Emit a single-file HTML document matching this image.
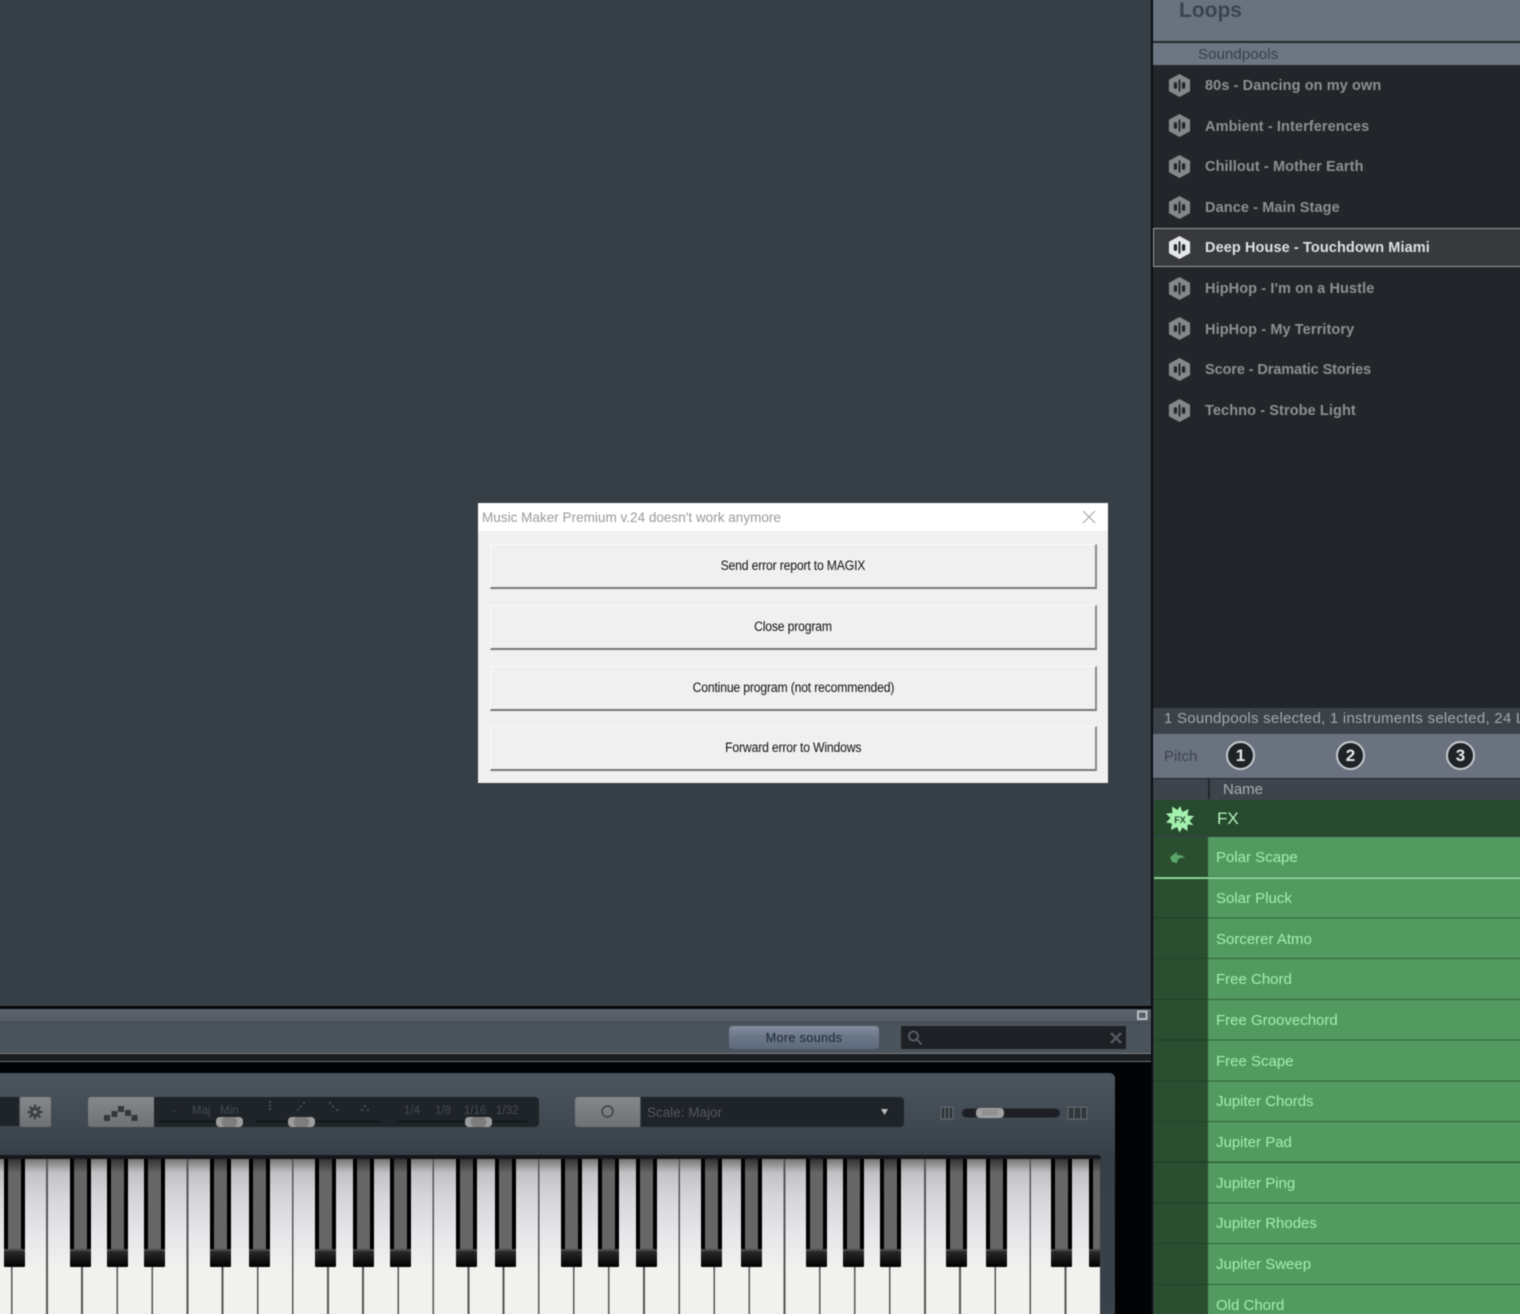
<!DOCTYPE html>
<html><head><meta charset="utf-8"><title>Music Maker</title>
<style>
html{margin:0;padding:0;width:1520px;height:1314px;overflow:hidden;background:#363e46}
body{margin:0;padding:0;width:1520px;height:1314px;position:relative;overflow:hidden;background:#363e46;font-family:"Liberation Sans",sans-serif}
.a{position:absolute}
.t{position:absolute;white-space:nowrap;line-height:1}
.l{position:absolute;left:1205px;white-space:nowrap;font-size:14.5px;font-weight:bold;color:#8d9093;line-height:18px;letter-spacing:.1px}
.i{position:absolute;left:1168px}
.g{position:absolute;left:1216px;white-space:nowrap;font-size:15px;color:#a5eeb0;line-height:18px}
.b{position:absolute;left:490px;width:604px;height:42px;background:#f0f0f0;border-top:1px solid #fafafa;border-left:1px solid #fafafa;border-right:2px solid #8a8a8a;border-bottom:2px solid #777;text-align:center;font-size:13.5px;line-height:42px;color:#111;letter-spacing:-.2px}
.b span{display:inline-block;transform:scaleX(.905)}
.c{position:absolute;top:741px;width:25px;height:25px;border-radius:50%;background:#1e2327;border:2.5px solid #c6cace;color:#e8e8e8;font-weight:bold;font-size:17px;text-align:center;line-height:26px}
.s{position:absolute;top:1106px;font-size:11.5px;color:#454c51;line-height:1;white-space:nowrap}
.th{position:absolute;top:1117px;width:27px;height:10px;border-radius:4px;background:repeating-linear-gradient(90deg,#707070 0 1px,#8a8a8a 1px 2px);box-shadow:inset 6px 0 0 #9c9c9c,inset -6px 0 0 #9c9c9c}
.k{position:absolute;top:1159px;width:21px;height:108px;background:linear-gradient(#000 0 90px,#4a4a4a 90px 92px,#2b2b2b 92px,#000 108px);border-radius:0 0 1px 1px}
.k:before{content:"";position:absolute;left:4px;top:0;width:13px;height:90px;background:linear-gradient(#333,#666 14px)}
#w{position:absolute;left:0;top:1159px;width:1100px;height:165px;background:linear-gradient(#777,#c2c2c6 14px,#d6d6da 38px,#e8e8ec 78px,#f1f1ee 110px)}
#sep{position:absolute;left:11px;top:1159px;width:1088px;height:165px;background:repeating-linear-gradient(90deg,#555 0 1.7px,transparent 1.7px 35.12px)}
</style></head>
<body>
<div id="root" style="position:absolute;inset:0;filter:blur(.5px)">

<!-- bottom instrument area -->
<div class="a" style="left:-5px;top:1006px;width:1157px;height:3px;background:#050607"></div>
<div class="a" style="left:-5px;top:1009px;width:1157px;height:13px;background:linear-gradient(#5d6670,#515962);border-bottom:1px solid #3e454c"></div>
<div class="a" style="left:-5px;top:1023px;width:1157px;height:30px;background:#4b545c"></div>
<div class="a" style="left:-5px;top:1053px;width:1157px;height:1px;background:#7b8287"></div>
<div class="a" style="left:-5px;top:1054px;width:1157px;height:7px;background:#1a1e22"></div>
<div class="a" style="left:-5px;top:1061px;width:1157px;height:1px;background:#6e757b"></div>
<div class="a" style="left:-5px;top:1062px;width:1157px;height:262px;background:#020304"></div>
<div class="a" style="left:-5px;top:1073px;width:1120px;height:251px;border-radius:0 5px 0 0;background:linear-gradient(#4b555d,#434c54 40px,#373f46 84px,#39414a)"></div>
<svg class="a" style="left:1137px;top:1010px" width="11" height="11"><rect x="1" y="1.500" width="8.500" height="7.500" fill="none" stroke="#b9bec2" stroke-width="2"/></svg>

<div class="a" style="left:729px;top:1026px;width:150px;height:23px;border-radius:4px;background:linear-gradient(#84909f,#6b7789 45%,#5e6a7c);text-align:center;font-size:12.7px;line-height:25px;color:#1c2735;letter-spacing:.3px">More sounds</div>
<div class="a" style="left:901px;top:1026px;width:225px;height:23px;background:#1d2125"></div>
<svg class="a" style="left:906px;top:1029px" width="18" height="18" fill="none" stroke="#5a6064" stroke-width="1.800"><circle cx="7.500" cy="7" r="4.500"/><path d="M11 10.500l4.500 5"/></svg>
<svg class="a" style="left:1109px;top:1031px" width="14" height="14" fill="none" stroke="#54595d" stroke-width="2.500"><path d="M2 2l10 10M12 2L2 12"/></svg>

<!-- toolbar -->
<div class="a" style="left:-5px;top:1097px;width:24px;height:29px;background:#1f2428"></div>
<div class="a" style="left:20px;top:1097px;width:31px;height:30px;border-radius:2px;background:linear-gradient(#85878a,#6f7174)"></div>
<svg class="a" style="left:26px;top:1103px" width="18" height="18" fill="none" stroke="#3c3f42"><circle cx="9" cy="9" r="3.500" stroke-width="3"/><path d="M9 1.500v3M9 13.500v3M1.500 9h3M13.500 9h3M3.700 3.700l2.100 2.100M12.200 12.200l2.100 2.100M3.700 14.300l2.100-2.100M12.200 5.800l2.100-2.100" stroke-width="2.200"/></svg>

<div class="a" style="left:88px;top:1097px;width:66px;height:30px;border-radius:3px 0 0 3px;background:linear-gradient(#85878a,#6f7174)"></div>
<svg class="a" style="left:102px;top:1104px" width="36" height="20" fill="#35383b"><rect x="2" y="11" width="6" height="6"/><rect x="9.500" y="7" width="6" height="6"/><rect x="16" y="2" width="6" height="6"/><rect x="23" y="6" width="6" height="6"/><rect x="29.500" y="11" width="6" height="6"/></svg>
<div class="a" style="left:154px;top:1097px;width:385px;height:30px;border-radius:0 4px 4px 0;background:#1f2428"></div>
<div class="a" style="left:159px;top:1121px;width:85px;height:1px;background:#0b0c0d"></div>
<div class="a" style="left:256px;top:1121px;width:125px;height:1px;background:#0b0c0d"></div>
<div class="a" style="left:397px;top:1121px;width:130px;height:1px;background:#0b0c0d"></div>
<div class="s" style="left:172px">-</div><div class="s" style="left:192px">Maj</div><div class="s" style="left:220px">Min</div>
<div class="s" style="left:404px">1/4</div><div class="s" style="left:435px">1/8</div><div class="s" style="left:464px">1/16</div><div class="s" style="left:496px">1/32</div>
<svg class="a" style="left:262px;top:1098px" width="112" height="16" fill="#454c51"><rect x="7" y="3" width="2" height="2"/><rect x="7" y="6.500" width="2" height="2"/><rect x="7" y="10" width="2" height="2"/><rect x="35" y="11" width="2" height="2"/><rect x="38" y="7.500" width="2" height="2"/><rect x="41" y="4" width="2" height="2"/><rect x="67" y="4" width="2" height="2"/><rect x="70" y="7.500" width="2" height="2"/><rect x="74" y="11" width="2" height="2"/><rect x="99" y="11" width="2" height="2"/><rect x="102" y="7" width="2" height="2"/><rect x="105" y="11" width="2" height="2"/></svg>
<div class="th" style="left:216px"></div><div class="th" style="left:288px"></div><div class="th" style="left:465px"></div>

<div class="a" style="left:575px;top:1097px;width:65px;height:30px;border-radius:3px 0 0 3px;background:linear-gradient(#85878a,#6f7174)"></div>
<svg class="a" style="left:600px;top:1104px" width="15" height="15" fill="none" stroke="#3e4144" stroke-width="1.500"><circle cx="7.500" cy="7.500" r="5.500"/></svg>
<div class="a" style="left:641px;top:1097px;width:263px;height:30px;border-radius:0 4px 4px 0;background:#1f2428"></div>
<div class="t" style="left:647px;top:1106px;font-size:13.5px;color:#52585d">Scale: Major</div>
<svg class="a" style="left:880px;top:1108px" width="9" height="8" fill="#b9bcbe"><path d="M1 1h7L4.500 7z"/></svg>

<svg class="a" style="left:939px;top:1104px" width="150" height="18">
<g fill="#33383c" stroke="#687076" stroke-width="1"><rect x="2" y="3" width="12" height="12"/><path d="M6 3v12M10 3v12" fill="none"/><rect x="129" y="3" width="19" height="12"/><path d="M135 3v12M142 3v12" fill="none"/></g>
<rect x="23" y="4.500" width="98" height="9" rx="4.500" fill="#1c2024"/>
<rect x="37" y="4" width="28" height="10" rx="4" fill="#a0a0a0"/>
<path d="M43 6.500h16M43 8.500h16M43 10.500h16" stroke="#808080" stroke-width="1"/></svg>

<!-- keyboard -->
<div class="a" style="left:-5px;top:1155px;width:1106px;height:4px;background:#15181b;border-radius:0 3px 0 0"></div>
<div id="w" style="left:-5px;width:1105px"></div><div id="sep"></div>
<div class="k" style="left:3.500px"></div><div class="k" style="left:69.500px"></div><div class="k" style="left:107px"></div><div class="k" style="left:144px"></div>
<div class="k" style="left:209.500px"></div><div class="k" style="left:249px"></div><div class="k" style="left:315px"></div><div class="k" style="left:352.500px"></div><div class="k" style="left:390px"></div>
<div class="k" style="left:455.500px"></div><div class="k" style="left:495px"></div><div class="k" style="left:560.500px"></div><div class="k" style="left:598px"></div><div class="k" style="left:635.500px"></div>
<div class="k" style="left:701px"></div><div class="k" style="left:741px"></div><div class="k" style="left:805.500px"></div><div class="k" style="left:842.500px"></div><div class="k" style="left:880px"></div>
<div class="k" style="left:945.500px"></div><div class="k" style="left:985.500px"></div><div class="k" style="left:1051px"></div><div class="k" style="left:1089px;width:11px;overflow:hidden"></div>

<!-- right panel -->
<div class="a" style="left:1151px;top:-5px;width:2px;height:1330px;background:#0b0d0f"></div>
<div class="a" style="left:1153px;top:-5px;width:372px;height:46px;background:#69727f"></div>
<div class="t" style="left:1179px;top:0;font-size:21px;font-weight:bold;color:#3a4350">Loops</div>
<div class="a" style="left:1153px;top:41px;width:372px;height:2px;background:#23282d"></div>
<div class="a" style="left:1153px;top:43px;width:372px;height:22px;background:#6d7683"></div>
<div class="t" style="left:1198px;top:47px;font-size:15px;color:#363e49;letter-spacing:.1px">Soundpools</div>
<div class="a" style="left:1153px;top:65px;width:372px;height:643px;background:#22262a"></div>
<div class="a" style="left:1153px;top:228px;width:372px;height:37px;background:#37393c;border:1px solid #9b9ea1;border-right:0"></div>

<svg width="0" height="0" style="position:absolute"><defs>
<symbol id="h" viewBox="0 0 24 26"><path d="M12 1L23 7v12l-11 6L1 19V7z" fill="currentColor"/><rect x="6" y="9.500" width="3.500" height="7" rx="1.700" fill="#22262a"/><rect x="11" y="6.500" width="2" height="13" rx="1" fill="#22262a"/><rect x="14.500" y="9.500" width="3.500" height="7" rx="1.700" fill="#22262a"/></symbol>
</defs></svg>

<svg class="i" style="top:73px;color:#85888b" width="23" height="25"><use href="#h"/></svg><div class="l" style="top:77px">80s - Dancing on my own</div>
<svg class="i" style="top:113px;color:#85888b" width="23" height="25"><use href="#h"/></svg><div class="l" style="top:118px">Ambient - Interferences</div>
<svg class="i" style="top:154px;color:#85888b" width="23" height="25"><use href="#h"/></svg><div class="l" style="top:158px">Chillout - Mother Earth</div>
<svg class="i" style="top:195px;color:#85888b" width="23" height="25"><use href="#h"/></svg><div class="l" style="top:199px">Dance - Main Stage</div>
<svg class="i" style="top:235px;color:#e6e7e8" width="23" height="25"><use href="#h"/></svg><div class="l" style="top:239px;color:#dfe2e5">Deep House - Touchdown Miami</div>
<svg class="i" style="top:276px;color:#85888b" width="23" height="25"><use href="#h"/></svg><div class="l" style="top:280px">HipHop - I'm on a Hustle</div>
<svg class="i" style="top:316px;color:#85888b" width="23" height="25"><use href="#h"/></svg><div class="l" style="top:321px">HipHop - My Territory</div>
<svg class="i" style="top:357px;color:#85888b" width="23" height="25"><use href="#h"/></svg><div class="l" style="top:361px;letter-spacing:-.1px">Score - Dramatic Stories</div>
<svg class="i" style="top:398px;color:#85888b" width="23" height="25"><use href="#h"/></svg><div class="l" style="top:402px">Techno - Strobe Light</div>

<div class="a" style="left:1153px;top:708px;width:372px;height:26px;background:#3b4249"></div>
<div class="t" style="left:1164px;top:711px;font-size:15px;color:#a3a8ad;letter-spacing:.25px">1 Soundpools selected, 1 instruments selected, 24 Loops</div>
<div class="a" style="left:1153px;top:734px;width:372px;height:44px;background:#6a7280"></div>
<div class="t" style="left:1164px;top:749px;font-size:15px;color:#3d4450">Pitch</div>
<div class="c" style="left:1226px">1</div><div class="c" style="left:1336px">2</div><div class="c" style="left:1446px">3</div>
<div class="a" style="left:1153px;top:778px;width:372px;height:21px;background:#3d444c;border-top:1px solid #23272b"></div>
<div class="a" style="left:1208px;top:779px;width:1.500px;height:20px;background:#23272b"></div>
<div class="t" style="left:1223px;top:782px;font-size:15px;color:#a9aeb3">Name</div>

<div class="a" style="left:1154px;top:800px;width:371px;height:36px;background:#264a2e"></div>
<div class="t" style="left:1217px;top:810px;font-size:17px;color:#b5f0bd">FX</div>
<svg class="a" style="left:1165px;top:805px" width="30" height="28"><path d="M15 1l2.500 6 6-3-1 6.500 6.500.5-4.500 5 4 4-6-.5 0 6.500-5-3.500-3 5-2.500-5.500-6 3 1-6.500-6-1 4.500-4.500-4.500-4.500 6.500-.5-.5-6.500 5.500 3.500z" fill="#a4f0ae"/><text x="15" y="18" font-size="9" font-weight="bold" text-anchor="middle" fill="#264a2e" font-family="Liberation Sans">FX</text></svg>

<div class="a" style="left:1154px;top:837px;width:54px;height:487px;background:repeating-linear-gradient(#294f30 0 39.7px,#1f3f26 39.7px 40.72px)"></div>
<div class="a" style="left:1208px;top:837px;width:317px;height:487px;background:repeating-linear-gradient(#529a5f 0 39.7px,#2f5f3a 39.7px 40.72px)"></div>
<div class="a" style="left:1154px;top:877px;width:371px;height:1.500px;background:#8fd49a"></div>
<svg class="a" style="left:1169px;top:850px" width="18" height="15"><path d="M1 7L8 2v3c3 0 6 .5 8 2.500-3 0-5 .5-7 2L8 13l-5-1z" fill="#5aa56a"/></svg>

<div class="g" style="top:849px">Polar Scape</div>
<div class="g" style="top:890px">Solar Pluck</div>
<div class="g" style="top:931px">Sorcerer Atmo</div>
<div class="g" style="top:971px">Free Chord</div>
<div class="g" style="top:1012px">Free Groovechord</div>
<div class="g" style="top:1053px">Free Scape</div>
<div class="g" style="top:1093px">Jupiter Chords</div>
<div class="g" style="top:1134px">Jupiter Pad</div>
<div class="g" style="top:1175px">Jupiter Ping</div>
<div class="g" style="top:1215px">Jupiter Rhodes</div>
<div class="g" style="top:1256px">Jupiter Sweep</div>
<div class="g" style="top:1297px">Old Chord</div>

<!-- dialog -->
<div class="a" style="left:478px;top:503px;width:630px;height:280px;background:#f0f0f0"></div>
<div class="a" style="left:478px;top:503px;width:630px;height:28px;background:#fff"></div>
<div class="t" style="left:482px;top:511px;font-size:13.55px;color:#9a9a9a">Music Maker Premium v.24 doesn't work anymore</div>
<svg class="a" style="left:1082px;top:510px" width="14" height="14" fill="none" stroke="#a0a0a0" stroke-width="1"><path d="M1 1l12 12M13 1L1 13"/></svg>
<div class="b" style="top:544px"><span>Send error report to MAGIX</span></div>
<div class="b" style="top:605px"><span>Close program</span></div>
<div class="b" style="top:666px"><span>Continue program (not recommended)</span></div>
<div class="b" style="top:726px"><span>Forward error to Windows</span></div>
</div>
</body></html>
